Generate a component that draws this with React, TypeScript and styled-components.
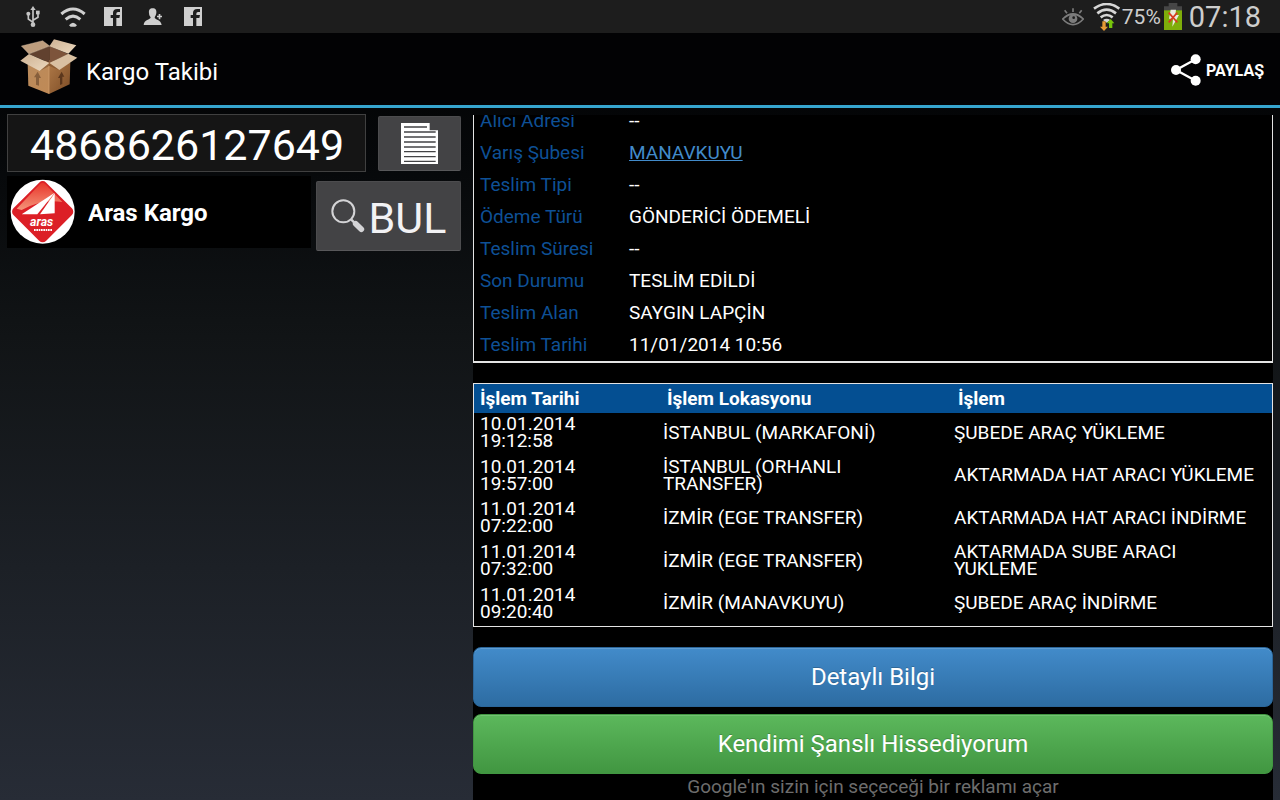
import React from "react";
import styled, { createGlobalStyle } from "styled-components";

const GlobalStyle = createGlobalStyle`
  * { box-sizing: border-box; }
  body {
    margin: 0;
    background: #000;
    color: #fff;
    font-family: Roboto, "Noto Sans", sans-serif;
  }
  button, input, select { font: inherit; color: inherit; }
`;

const Screen = styled.div`
  display: flex;
  flex-direction: column;
  height: 100vh;
  overflow: hidden;
  background: linear-gradient(#000 0, #06080a 20%, #111416 42%, #272c36 100%);
`;

const StatusBar = styled.div`
  display: flex;
  flex: none;
  align-items: center;
  justify-content: space-between;
  height: 33px;
  padding: 0 19px 0 13px;
  background: #1d1d1d;
  color: #cdcdcd;
`;

const Notifications = styled.div`
  display: flex;
`;

const NotificationSlot = styled.span`
  display: flex;
  align-items: center;
  justify-content: center;
  width: 40px;
  height: 33px;
`;

const SystemTray = styled.div`
  display: flex;
  align-items: center;
`;

const TrayIcon = styled.span<{ $gap: number }>`
  display: flex;
  margin-right: ${(p) => p.$gap}px;
`;

const BatteryText = styled.span`
  padding-top: 2px;
  font-size: 21px;
  line-height: 33px;
  margin-right: 3px;
`;

const Clock = styled.time`
  padding-top: 1px;
  font-size: 29px;
  line-height: 33px;
`;

const ActionBar = styled.header`
  display: flex;
  flex: none;
  align-items: center;
  height: 75px;
  padding: 0 16px 0 20px;
  background: #020204;
  border-bottom: 3px solid #36a5cf;
`;

const AppIcon = styled.span`
  display: flex;
  height: 60px;
  margin-right: 8px;
`;

const Title = styled.h1`
  flex: 1;
  margin: 0;
  padding-top: 5px;
  font-size: 24px;
  font-weight: 400;
  line-height: 32px;
`;

const ShareButton = styled.button`
  display: flex;
  align-items: center;
  gap: 5px;
  padding: 2px 0 0;
  border: 0;
  background: none;
  font-size: 16px;
  font-weight: 700;
`;

const Content = styled.div`
  display: grid;
  grid-template-columns: 473px 1fr;
  flex: 1;
  min-height: 0;
  padding-right: 7px;
`;

const SearchForm = styled.form`
  display: flex;
  flex-direction: column;
  gap: 4px;
  padding: 6px 12px 0 7px;
`;

const FormRow = styled.div<{ $gap: number }>`
  display: flex;
  align-items: center;
  gap: ${(p) => p.$gap}px;
`;

const TrackingInput = styled.input`
  flex: 1;
  min-width: 0;
  height: 58px;
  padding: 4px 22px 0;
  border: 1px solid #404040;
  background: #151515;
  font-size: 43px;
  outline: none;
`;

const GreyButton = styled.button<{ $width: number; $height: number }>`
  display: flex;
  flex: none;
  align-items: center;
  justify-content: center;
  gap: 4px;
  width: ${(p) => p.$width}px;
  height: ${(p) => p.$height}px;
  padding: 0;
  border: 1px solid #4c4c4e;
  border-bottom-color: #58585a;
  border-radius: 2px;
  background: #434345;
  color: #f2f2f4;
  font-size: 43px;
`;

const ButtonLabel = styled.span`
  padding-top: 4px;
`;

const SearchRow = styled(FormRow)`
  align-items: flex-start;
`;

const SearchSlot = styled.div`
  padding-top: 5px;
`;

const CarrierField = styled.label`
  display: flex;
  flex: 1;
  align-items: center;
  gap: 12px;
  height: 72px;
  padding-left: 3px;
  background: #000;
`;

const CarrierSelect = styled.select`
  flex: 1;
  min-width: 0;
  height: 48px;
  padding: 2px 0 0;
  border: 0;
  appearance: none;
  background: #000;
  font-size: 24px;
  font-weight: 700;
`;

const ResultPane = styled.main`
  display: flex;
  flex-direction: column-reverse;
  min-height: 0;
  margin-top: 7px;
  overflow-y: auto;
  scrollbar-width: none;
  background: #000;
`;

const Results = styled.div`
  display: flex;
  flex: none;
  flex-direction: column;
`;

const DetailTable = styled.table`
  width: 100%;
  margin-bottom: 20px;
  border: 1px solid #e4e4e4;
  border-top: 0;
  border-bottom-width: 2px;
  border-spacing: 0;
  font-size: 19px;
  line-height: 20px;
  th, td {
    height: 32px;
    padding: 0 6px;
    text-align: left;
    font-weight: 400;
  }
  th {
    width: 149px;
    color: #0e5096;
  }
`;

const BranchLink = styled.a`
  color: #428bca;
`;

const MoveTable = styled.table`
  width: 100%;
  height: 244px;
  margin-bottom: 20px;
  table-layout: fixed;
  border: 1px solid #e4e4e4;
  border-spacing: 0;
  font-size: 19px;
  line-height: 17px;
  th, td {
    padding: 0 6px;
    text-align: left;
  }
  td { padding: 0 16px 4px 6px; }
  th {
    height: 29px;
    background: #044f92;
    font-weight: 700;
  }
  th + th { padding-left: 10px; }
`;

const MoveColumn = styled.col<{ $share?: number }>`
  width: ${(p) => (p.$share ? `${p.$share}px` : "auto")};
`;

const Actions = styled.div`
  display: flex;
  flex-direction: column;
  gap: 7px;
`;

const ActionButton = styled.button<{ $tone: "blue" | "green" }>`
  height: 60px;
  padding: 0;
  border: 1px solid ${(p) => (p.$tone === "blue" ? "#2b669a" : "#419641")};
  border-radius: 8px;
  background: ${(p) =>
    p.$tone === "blue"
      ? "linear-gradient(#428bca, #2d6ca2)"
      : "linear-gradient(#5cb85c, #419641)"};
  box-shadow: inset 0 1px 0 rgba(255, 255, 255, 0.15);
  font-size: 24px;
  text-shadow: 0 -1px 0 rgba(0, 0, 0, 0.2);
`;

const Note = styled.p`
  margin: 0;
  color: #6d6d6d;
  font-size: 19px;
  line-height: 26px;
  text-align: center;
`;

const UsbIcon = () => (
  <svg width="14" height="21" viewBox="79 17 42 63" fill="#c4c4c4" stroke="#c4c4c4" strokeWidth="5">
    <path d="M100 24v50M100 66L86 56V40M100 60l15-9V38" fill="none" />
    <path d="M100 17l8 12H92z" stroke="none" />
    <circle cx="100" cy="73" r="7" stroke="none" />
    <circle cx="86" cy="40" r="6" stroke="none" />
    <path d="M109 31h11v11h-11z" stroke="none" />
  </svg>
);

const WifiIcon = () => (
  <svg width="26" height="20" viewBox="180 21 78 60" fill="none" stroke="#cfcfcf" strokeWidth="9">
    <path d="M184 42Q219 12 254 42M197 58Q219 39 241 58" />
    <path d="M207 76Q219 60 231 76L226 80H212z" fill="#cfcfcf" stroke="none" />
  </svg>
);

const FacebookIcon = () => (
  <svg width="18" height="19" viewBox="0 0 54 57">
    <path d="M0 0h54v57H0z" fill="#cfcfcf" />
    <path d="M27 57V33h-7v-9h7v-6Q27 6 40 6h8v9h-6q-5 0-5 5v4h11l-2 9h-9v24z" fill="#1d1d1d" />
  </svg>
);

const ContactIcon = () => (
  <svg width="20" height="18" viewBox="430 26 60 54" fill="#cfcfcf">
    <path d="M459 27c9 0 12 6 11 14-1 7-4 10-5 13 0 8 19 7 21 23h-54c1-16 20-15 21-23-2-3-5-6-5-13-1-8 2-14 11-14z" />
    <path d="M477 44h5v5h5v5h-5v6h-5v-6h-5v-5h5z" />
  </svg>
);

const EyeIcon = () => (
  <svg width="22" height="18" viewBox="67 23 66 54" fill="none" stroke="#7c7c7c" strokeWidth="5">
    <path d="M69 56Q100 26 131 56Q100 90 69 56z" />
    <circle cx="100" cy="55" r="13" fill="#7c7c7c" stroke="none" />
    <circle cx="102" cy="52" r="4" fill="#1d1d1d" stroke="none" />
    <path d="M100 24v11M75 30l7 9M126 30l-7 9" />
  </svg>
);

const SignalIcon = () => (
  <svg width="27" height="28" viewBox="158 6 81 84" fill="none" stroke="#d6d6d6" strokeWidth="8">
    <path d="M161 23Q199 -5 237 23M171 37Q199 15 227 37M181 49Q199 35 217 49" />
    <path d="M188 57q11-8 22 0l-11 8z" fill="#d6d6d6" stroke="none" />
    <path d="M186 61h10v16h7l-12 13-12-13h7z" fill="#e59a35" stroke="none" />
    <path d="M206 81V67h-7l12-13 11 13h-6v14z" fill="#76c50b" stroke="none" />
  </svg>
);

const BatteryIcon = () => (
  <svg width="18" height="27" viewBox="372 10 54 81">
    <path d="M386 10h26v10h14v71h-54V20h14z" fill="#464646" />
    <path d="M372 32h54v59h-54z" fill="#7fae0a" />
    <path d="M392 30h16l-2 16h11l-20 35 2-24h-12z" fill="#e9eadf" />
    <path d="M386 39l26 29M412 39l-26 29" stroke="#d83b20" strokeWidth="5" />
  </svg>
);

const BoxIcon = () => (
  <svg width="58" height="56" viewBox="61 115 174 168">
    <defs>
      <linearGradient id="boxLeft" x1="0" y1="0" x2="1" y2="1">
        <stop offset="0" stopColor="#b98a5c" />
        <stop offset="1" stopColor="#c08a56" />
      </linearGradient>
      <linearGradient id="boxRight" x1="0" y1="0" x2="1" y2="1">
        <stop offset="0" stopColor="#b07a48" />
        <stop offset="1" stopColor="#7c4c26" />
      </linearGradient>
      <linearGradient id="boxFlap" x1="0" y1="0" x2="1" y2="1">
        <stop offset="0" stopColor="#cdb193" />
        <stop offset="1" stopColor="#ecd9bf" />
      </linearGradient>
    </defs>
    <path d="M84 188l64-10v102l-62-25z" fill="url(#boxLeft)" />
    <path d="M148 178l64 8-2 65-62 29z" fill="url(#boxRight)" />
    <path d="M88 160l61-24v50z" fill="#61412f" />
    <path d="M149 136l57 24-57 28z" fill="#7d543b" />
    <path d="M65 136l64-16 21 16-62 24z" fill="#bd9d7e" stroke="#e6d2b8" strokeWidth="1" />
    <path d="M163 116l67 18-24 25-57-22z" fill="url(#boxFlap)" />
    <path d="M62 180l26-20 61 27-29 24z" fill="url(#boxFlap)" />
    <path d="M149 187l57-28 27 12-54 37z" fill="#d9c0a2" />
    <path d="M120 211l29-24 30 21-30-12z" fill="#6f4526" opacity=".5" />
    <path d="M109 252v-22h-6l11-17 10 19h-6v23z" fill="#765033" opacity=".75" />
    <path d="M181 253v-21h-6l11-19 8 15h-6v22z" fill="#4c2c16" opacity=".8" />
    <path d="M148 196v83" stroke="#d3a473" strokeWidth="2" />
  </svg>
);

const ShareIcon = () => (
  <svg width="30" height="32" viewBox="393 164 90 96" fill="#fff">
    <path d="M467 180L408 212l59 32" fill="none" stroke="#fff" strokeWidth="7" />
    <circle cx="467" cy="180" r="15" />
    <circle cx="408" cy="212" r="15" />
    <circle cx="467" cy="244" r="15" />
  </svg>
);

const DocumentIcon = () => (
  <svg width="37" height="41" viewBox="514 45 111 123">
    <path d="M514 45h86v22h25v101H514z" fill="#fff" />
    <path
      d="M523 57h69M523 72h95M523 87h95M523 102h95M523 117h95M523 131h95M523 146h95M523 160h95"
      stroke="#434345"
      strokeWidth="4"
    />
  </svg>
);

const MagnifierIcon = () => (
  <svg width="34" height="34" viewBox="305 272 102 102" fill="none">
    <circle cx="342" cy="309" r="33" stroke="#d4d4d6" strokeWidth="6" />
    <path d="M366 334l12 12" stroke="#d4d4d6" strokeWidth="7" />
    <path d="M379 346l17 17" stroke="#d4d4d6" strokeWidth="17" strokeLinecap="round" />
  </svg>
);

const CarrierLogo = () => (
  <svg width="66" height="66" viewBox="31 214 198 198">
    <defs>
      <linearGradient id="logoShine" x1="0" y1="0" x2="0" y2="1">
        <stop offset="0" stopColor="#e8352a" />
        <stop offset="1" stopColor="#f49479" />
      </linearGradient>
      <clipPath id="logoClip">
        <circle cx="129" cy="312" r="96" />
      </clipPath>
    </defs>
    <circle cx="129" cy="312" r="96" fill="#fff" />
    <g clipPath="url(#logoClip)">
      <rect x="60" y="243" width="138" height="138" rx="14" transform="rotate(45 129 312)" fill="#dc1f26" />
      <path d="M122 228q7-6 14 0l52 55q-62-10-122 24l-15-4z" fill="url(#logoShine)" />
      <path d="M66 320l99-65-52 65z" fill="#fff" />
      <path d="M121 320l44-63v60z" fill="#fff" />
    </g>
    <text x="126" y="354" fill="#fff" textAnchor="middle" fontSize="37" fontWeight="700" fontStyle="italic">
      aras
    </text>
    <path d="M103 367h55" stroke="#fff" strokeWidth="6" strokeDasharray="5 2" />
  </svg>
);

const details: [string, string][] = [
  ["Alıcı Adresi", "--"],
  ["Varış Şubesi", "MANAVKUYU"],
  ["Teslim Tipi", "--"],
  ["Ödeme Türü", "GÖNDERİCİ ÖDEMELİ"],
  ["Teslim Süresi", "--"],
  ["Son Durumu", "TESLİM EDİLDİ"],
  ["Teslim Alan", "SAYGIN LAPÇİN"],
  ["Teslim Tarihi", "11/01/2014 10:56"],
];

const moves: [string, string, string, string][] = [
  ["10.01.2014", "19:12:58", "İSTANBUL (MARKAFONİ)", "ŞUBEDE ARAÇ YÜKLEME"],
  ["10.01.2014", "19:57:00", "İSTANBUL (ORHANLI TRANSFER)", "AKTARMADA HAT ARACI YÜKLEME"],
  ["11.01.2014", "07:22:00", "İZMİR (EGE TRANSFER)", "AKTARMADA HAT ARACI İNDİRME"],
  ["11.01.2014", "07:32:00", "İZMİR (EGE TRANSFER)", "AKTARMADA SUBE ARACI YUKLEME"],
  ["11.01.2014", "09:20:40", "İZMİR (MANAVKUYU)", "ŞUBEDE ARAÇ İNDİRME"],
];

const notifications = [UsbIcon, WifiIcon, FacebookIcon, ContactIcon, FacebookIcon];

export default function App() {
  return (
    <Screen>
      <GlobalStyle />
      <StatusBar>
        <Notifications>
          {notifications.map((Icon, i) => (
            <NotificationSlot key={i}>
              <Icon />
            </NotificationSlot>
          ))}
        </Notifications>
        <SystemTray>
          <TrayIcon $gap={9}><EyeIcon /></TrayIcon>
          <TrayIcon $gap={2}><SignalIcon /></TrayIcon>
          <BatteryText>75%</BatteryText>
          <TrayIcon $gap={7}><BatteryIcon /></TrayIcon>
          <Clock>07:18</Clock>
        </SystemTray>
      </StatusBar>

      <ActionBar>
        <AppIcon><BoxIcon /></AppIcon>
        <Title>Kargo Takibi</Title>
        <ShareButton type="button">
          <ShareIcon />
          PAYLAŞ
        </ShareButton>
      </ActionBar>

      <Content>
        <SearchForm onSubmit={(e) => e.preventDefault()}>
          <FormRow $gap={12}>
            <TrackingInput aria-label="Kargo takip numarası" defaultValue="4868626127649" />
            <GreyButton type="button" $width={83} $height={55} aria-label="Kayıtlar">
              <DocumentIcon />
            </GreyButton>
          </FormRow>
          <SearchRow $gap={5}>
            <CarrierField>
              <CarrierLogo />
              <CarrierSelect aria-label="Kargo firması" defaultValue="aras">
                <option value="aras">Aras Kargo</option>
              </CarrierSelect>
            </CarrierField>
            <SearchSlot>
              <GreyButton type="submit" $width={145} $height={70}>
                <MagnifierIcon />
                <ButtonLabel>BUL</ButtonLabel>
              </GreyButton>
            </SearchSlot>
          </SearchRow>
        </SearchForm>

        <ResultPane>
          <Results>
            <DetailTable>
              <tbody>
                {details.map(([label, value]) => (
                  <tr key={label}>
                    <th scope="row">{label}</th>
                    <td>{label === "Varış Şubesi" ? <BranchLink href="#sube">{value}</BranchLink> : value}</td>
                  </tr>
                ))}
              </tbody>
            </DetailTable>
            <MoveTable>
              <colgroup>
                <MoveColumn $share={183} />
                <MoveColumn $share={291} />
                <MoveColumn />
              </colgroup>
              <thead>
                <tr>
                  <th scope="col">İşlem Tarihi</th>
                  <th scope="col">İşlem Lokasyonu</th>
                  <th scope="col">İşlem</th>
                </tr>
              </thead>
              <tbody>
                {moves.map(([date, time, place, action]) => (
                  <tr key={date + time}>
                    <td>
                      {date}
                      <br />
                      {time}
                    </td>
                    <td>{place}</td>
                    <td>{action}</td>
                  </tr>
                ))}
              </tbody>
            </MoveTable>
            <Actions>
              <ActionButton type="button" $tone="blue">Detaylı Bilgi</ActionButton>
              <ActionButton type="button" $tone="green">Kendimi Şanslı Hissediyorum</ActionButton>
            </Actions>
            <Note>Google'ın sizin için seçeceği bir reklamı açar</Note>
          </Results>
        </ResultPane>
      </Content>
    </Screen>
  );
}
